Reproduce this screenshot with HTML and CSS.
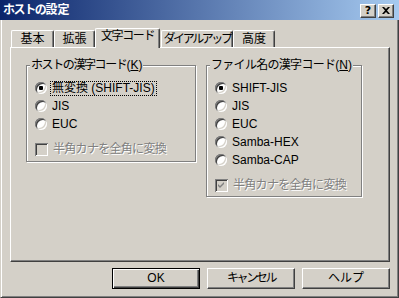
FILE: index.html
```html
<!DOCTYPE html>
<html lang="ja">
<head>
    <meta charset="UTF-8">
    <title>ホストの設定</title>
    <link rel="stylesheet" href="styles.css">
</head>
<body>
    <div class="titlebar">
        <span class="title"><span class="tight">ホストの</span>設定</span>
        <div class="caption-btns">
            <div class="cap cap-help">?</div>
            <div class="cap">
                <svg width="8" height="7" viewBox="0 0 8 7"><path d="M0 0h2l2 2 2-2h2L5 3.5 8 7H6L4 5 2 7H0l3-3.5z" fill="#000"/></svg>
            </div>
        </div>
    </div>

    <div class="main">
        <div class="tabs">
            <div class="tab" style="width:43px">基本</div>
            <div class="tab" style="width:41px">拡張</div>
            <div class="tab active" style="width:65px"><span class="tight">文字コード</span></div>
            <div class="tab gap" style="width:72px"><span class="tighter">ダイアルアップ</span></div>
            <div class="tab" style="width:42px">高度</div>
        </div>

        <div class="panel">
            <div class="group group-host">
                <div class="legend"><span class="tight">ホストの漢字コード</span>(<u>K</u>)</div>
                <div class="row"><span class="radio checked"></span><span class="label focus">無変換 (SHIFT-JIS)</span></div>
                <div class="row"><span class="radio"></span><span class="label">JIS</span></div>
                <div class="row"><span class="radio"></span><span class="label">EUC</span></div>
                <div class="row check-row"><span class="check"></span><span class="label disabled jp">半角カナを全角に変換</span></div>
            </div>

            <div class="group group-file">
                <div class="legend"><span class="jp">ファイル名の漢字コード</span>(<u>N</u>)</div>
                <div class="row"><span class="radio checked"></span><span class="label">SHIFT-JIS</span></div>
                <div class="row"><span class="radio"></span><span class="label">JIS</span></div>
                <div class="row"><span class="radio"></span><span class="label">EUC</span></div>
                <div class="row"><span class="radio"></span><span class="label">Samba-HEX</span></div>
                <div class="row"><span class="radio"></span><span class="label">Samba-CAP</span></div>
                <div class="row check-row">
                    <span class="check">
                        <svg width="13" height="13" viewBox="0 0 13 13"><path d="M3 5l2 2 4-4v2l-4 4-2-2z" fill="#808080"/></svg>
                    </span>
                    <span class="label disabled jp">半角カナを全角に変換</span>
                </div>
            </div>
        </div>

        <div class="buttons">
            <div class="btn default">OK</div>
            <div class="btn"><span class="tighter">キャンセル</span></div>
            <div class="btn">ヘルプ</div>
        </div>
    </div>
</body>
</html>
```

FILE: styles.css
```css
body {
    margin: 0;
    width: 399px;
    height: 298px;
    background: #d4d0c8;
    font-family: "Liberation Sans", "Noto Sans CJK JP", sans-serif;
    font-size: 12px;
    color: #000;
    overflow: hidden;
}

/* kana in the original UI font is narrower than in Noto */
.jp { letter-spacing: -0.7px; }
.tight { letter-spacing: -1.4px; }
.tighter { letter-spacing: -2.4px; }

/* title bar */
.titlebar {
    height: 20px;
    display: flex;
    align-items: center;
    padding: 0 5px 0 3px;
    background: linear-gradient(to right, #0a246a, #a6caf0);
}
.title { color: #fff; font-weight: bold; line-height: 14px; }
.caption-btns { margin-left: auto; display: flex; gap: 2px; padding-top: 1px; }
.cap {
    width: 16px;
    height: 14px;
    box-sizing: border-box;
    background: #d4d0c8;
    border: 1px solid;
    border-color: #fff #404040 #404040 #fff;
    box-shadow: inset -1px -1px 0 #808080;
    display: flex;
    align-items: center;
    justify-content: center;
}
.cap-help { font-weight: bold; font-size: 11px; line-height: 12px; font-family: "DejaVu Sans", sans-serif; }

/* dialog body */
.main {
    height: 278px;
    box-sizing: border-box;
    padding: 8px 0 0 9px;
    border-left: 1px solid #d4d0c8;
    border-right: 1px solid #404040;
    border-bottom: 1px solid #404040;
    box-shadow: inset 1px 0 0 #fff, inset -1px -1px 0 #808080;
}

.tabs { display: flex; align-items: flex-end; height: 19px; margin-left: 1px; }
.tab {
    height: 17px;
    box-sizing: border-box;
    text-align: center;
    white-space: nowrap;
    line-height: 16px;
    border-top: 1px solid #fff;
    border-left: 1px solid #fff;
    border-right: 1px solid #404040;
    border-radius: 2px 2px 0 0;
    box-shadow: inset -1px 0 0 #808080;
}
.tab.gap { margin-left: 1px; }
.tab.active {
    height: 20px;
    margin-bottom: -1px;
    line-height: 14px;
    position: relative;
    z-index: 1;
    background: #d4d0c8;
}

.panel {
    width: 380px;
    height: 215px;
    box-sizing: border-box;
    border: 1px solid;
    border-color: #fff #404040 #404040 #fff;
    box-shadow: inset -1px -1px 0 #808080;
    display: flex;
    align-items: flex-start;
    padding: 17px 0 0 15px;
}

/* group boxes */
.group {
    border: 1px solid #808080;
    box-shadow: 1px 1px 0 #fff, inset 1px 1px 0 #fff;
    padding: 0 0 3px 8px;
}
.group-host { width: 170px; box-sizing: border-box; }
.group-file { width: 156px; box-sizing: border-box; margin-left: 10px; padding-bottom: 2px; }
.legend {
    display: table;
    margin: -8px 0 7px -5px;
    padding: 0 1px;
    line-height: 14px;
    white-space: nowrap;
    background: #d4d0c8;
}
.legend u { text-underline-offset: 1px; }

.row { display: flex; align-items: center; height: 18px; white-space: nowrap; }
.check-row { margin-top: 7px; }
.label { margin-left: 5px; line-height: 13px; }
.label.focus { outline: 1px dotted #000; margin-left: 4px; padding: 0 1px; }
.label.disabled { color: #808080; text-shadow: 1px 1px 0 #fff; }

.radio {
    width: 12px;
    height: 12px;
    flex: none;
    border-radius: 50%;
    background: #fff;
    box-shadow: inset 1px 1px 0 #808080, inset -1px -1px 0 #fff, inset 2px 2px 0 #404040, inset -2px -2px 0 #d4d0c8;
    display: flex;
    align-items: center;
    justify-content: center;
}
.radio.checked::after {
    content: "";
    width: 4px;
    height: 4px;
    border-radius: 1px;
    background: #000;
}

.check {
    width: 13px;
    height: 13px;
    flex: none;
    background: #d4d0c8;
    box-shadow: inset 1px 1px 0 #808080, inset -1px -1px 0 #fff, inset 2px 2px 0 #404040, inset -2px -2px 0 #d4d0c8;
}
.check svg { display: block; }

/* bottom buttons */
.buttons { display: flex; gap: 7px; margin-top: 6px; padding-left: 102px; }
.btn {
    width: 88px;
    height: 21px;
    box-sizing: border-box;
    border: 1px solid;
    border-color: #fff #404040 #404040 #fff;
    box-shadow: inset -1px -1px 0 #808080;
    text-align: center;
    line-height: 18px;
}
.btn.default {
    border-color: #000;
    box-shadow: inset 1px 1px 0 #fff, inset -1px -1px 0 #404040, inset -2px -2px 0 #808080;
}
```
